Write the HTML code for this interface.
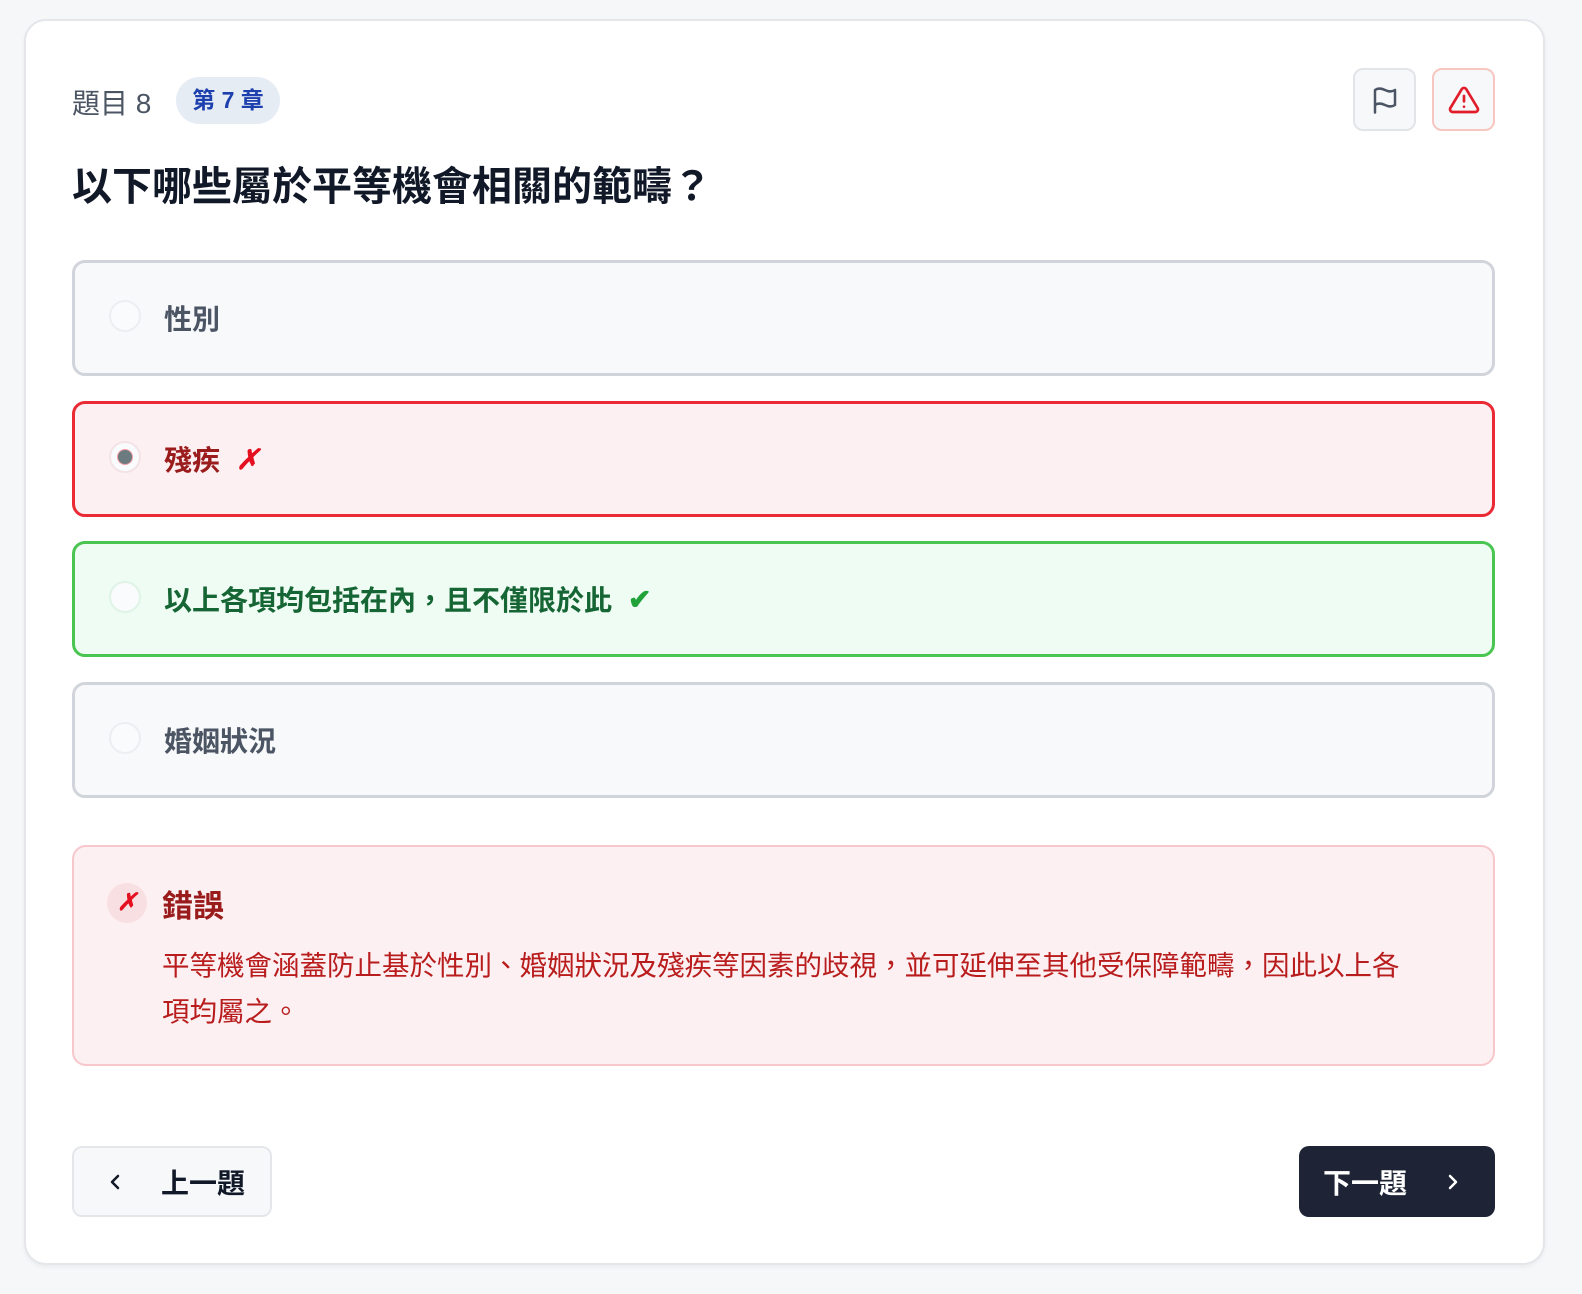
<!DOCTYPE html>
<html><head><meta charset="utf-8"><style>
*{box-sizing:border-box;margin:0;padding:0}
body{width:1582px;height:1294px;background:#f6f7f9;font-family:"Liberation Sans","Noto Sans CJK TC",sans-serif;position:relative;overflow:hidden}
.card{position:absolute;left:24px;top:19px;width:1521px;height:1246px;background:#fff;border:2px solid #e4e6ea;border-radius:22px;box-shadow:0 2px 4px rgba(0,0,0,.05)}
.abs{position:absolute}
.num{left:72px;top:82px;font-size:28px;color:#4b5563}
.tag{left:176px;top:77px;width:104px;height:47px;border-radius:24px;background:#e6ecf4;color:#1e40af;font-weight:700;font-size:23px;line-height:47px;text-align:center}
.ib{top:68px;width:63px;height:63px;border-radius:10px;background:#f7f8fa;border:2px solid #e2e4e8;display:flex;align-items:center;justify-content:center}
.q{left:72px;top:154px;font-size:40px;font-weight:700;color:#111827}
.opt{left:72px;width:1423px;height:116px;border:3px solid #d1d5db;border-radius:13px;background:#f8f9fb;display:flex;align-items:center;padding-left:89px;font-size:28px;font-weight:700;color:#4b5563}
.opt .r{position:absolute;left:34px;top:50%;margin-top:-18px;width:32px;height:32px;border-radius:50%;border:2px solid #eceef1;background:#fafbfc}
.fb{left:72px;top:845px;width:1423px;height:221px;border:2px solid #f7c7cb;border-radius:14px;background:#fcf0f2}
.btn{top:1146px;height:71px;border-radius:10px;display:flex;align-items:center;font-size:28px;font-weight:700}
</style></head><body>
<div class="card"></div>
<div class="abs num">題目 8</div>
<div class="abs tag">第 7 章</div>
<div class="abs ib" style="left:1353px"><svg width="30" height="30" viewBox="0 0 24 24" fill="none" stroke="#4b5563" stroke-width="2" stroke-linecap="round" stroke-linejoin="round"><path d="M4 22V4c3-2 6-1 8 0s5 2 8 0v12c-3 2-6 1-8 0s-5-2-8 0"/></svg></div>
<div class="abs ib" style="left:1432px;border-color:#f8c6c0"><svg width="32" height="32" viewBox="0 0 24 24" fill="none" stroke="#e11d2a" stroke-width="2" stroke-linecap="round" stroke-linejoin="round"><path d="M10.3 3.9 1.8 18a2 2 0 0 0 1.7 3h17a2 2 0 0 0 1.7-3L13.7 3.9a2 2 0 0 0-3.4 0z"/><path d="M12 9v4M12 17h.01"/></svg></div>
<div class="abs q">以下哪些屬於平等機會相關的範疇？</div>
<div class="abs opt" style="top:260px"><span class="r"></span>性別</div>
<div class="abs opt" style="top:401px;border-color:#ea2a35;background:#fcf0f2;color:#9b1c1c"><span class="r" style="border-color:#f3e3e6"><span style="position:absolute;left:7px;top:7px;width:14px;height:14px;border-radius:50%;background:#6b7b7f;box-shadow:0 0 0 1px #f19ca3"></span></span>殘疾<span style="color:#e4101f;margin-left:16px;font-style:italic">✗</span></div>
<div class="abs opt" style="top:541px;border-color:#4ac552;background:#eefcf3;color:#166534"><span class="r" style="border-color:#dff3e6"></span>以上各項均包括在內，且不僅限於此<span style="color:#22a33a;margin-left:16px">✔</span></div>
<div class="abs opt" style="top:682px"><span class="r"></span>婚姻狀況</div>
<div class="abs fb">
 <div class="abs" style="left:33px;top:36px;width:40px;height:40px;border-radius:50%;background:#f8dfe2;color:#e4101f;font-size:24px;font-weight:700;text-align:center;line-height:40px;font-style:italic">✗</div>
 <div class="abs" style="left:88px;top:34px;font-size:31px;font-weight:700;color:#991b1b">錯誤</div>
 <div class="abs" style="left:88px;top:96px;width:1260px;font-size:27.5px;line-height:46px;color:#b91c1c">平等機會涵蓋防止基於性別、婚姻狀況及殘疾等因素的歧視，並可延伸至其他受保障範疇，因此以上各項均屬之。</div>
</div>
<div class="abs btn" style="left:72px;width:200px;border:2px solid #e4e6ea;background:#f7f8fa;color:#111827"><svg style="margin-left:33px" width="16" height="20" viewBox="0 0 16 20" fill="none" stroke="#111827" stroke-width="2.5" stroke-linecap="round" stroke-linejoin="round"><path d="M11 4 5 10l6 6"/></svg><span style="margin-left:38px">上一題</span></div>
<div class="abs btn" style="left:1299px;width:196px;background:#1e2436;color:#fff"><span style="margin-left:24px">下一題</span><svg style="margin-left:38px" width="16" height="20" viewBox="0 0 16 20" fill="none" stroke="#fff" stroke-width="2.5" stroke-linecap="round" stroke-linejoin="round"><path d="M5 4l6 6-6 6"/></svg></div>
</body></html>
